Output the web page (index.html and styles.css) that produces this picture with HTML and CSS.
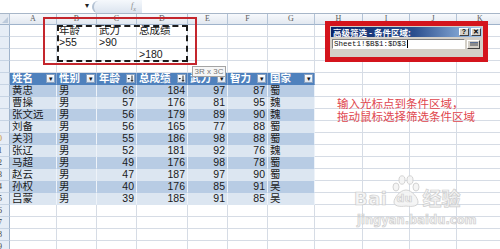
FILE: index.html
```html
<!DOCTYPE html>
<html lang="zh-CN">
<head>
<meta charset="utf-8">
<title>高级筛选</title>
<link rel="stylesheet" href="styles.css">
</head>
<body>
<div class="app">
  <div class="formula-bar">
    <div class="name-box"></div>
    <span class="name-arrow">▾</span>
    <div class="fx-zone"><span class="grip"></span><span class="fx">f<sub>x</sub></span></div>
    <div class="formula-input"></div>
  </div>

  <table class="grid">
    <colgroup>
      <col class="c-rh"><col class="c-a"><col class="c-b"><col class="c-c"><col class="c-d"><col class="c-e">
      <col class="c-f"><col class="c-g"><col class="c-h"><col class="c-i"><col class="c-j"><col class="c-k">
    </colgroup>
    <thead>
      <tr><th class="corner"><span class="corner-tri"></span></th><th>A</th><th>B</th><th>C</th><th>D</th><th>E</th><th>F</th><th>G</th><th>H</th><th>I</th><th>J</th><th>K</th></tr>
    </thead>
    <tbody>
      <tr><th class="rh"></th><td></td><td>年龄</td><td>武力</td><td>总成绩</td><td></td><td></td><td></td><td></td><td></td><td></td><td></td></tr>
      <tr><th class="rh"></th><td></td><td>&gt;55</td><td>&gt;90</td><td></td><td></td><td></td><td></td><td></td><td></td><td></td><td></td></tr>
      <tr><th class="rh"></th><td></td><td></td><td></td><td>&gt;180</td><td></td><td></td><td></td><td></td><td></td><td></td><td></td></tr>
      <tr><th class="rh"></th><td></td><td></td><td></td><td></td><td></td><td></td><td></td><td></td><td></td><td></td><td></td></tr>
      <tr class="t-head">
        <th class="rh"></th>
        <td class="t"><div class="hd"><span>姓名</span><i class="dd">▾</i></div></td>
        <td class="t"><div class="hd"><span>性别</span><i class="dd">▾</i></div></td>
        <td class="t"><div class="hd"><span>年龄</span><i class="dd sort"><svg viewBox="0 0 7 7" width="7" height="7"><path d="M0.5 3 L3 3 L1.75 4.6 Z" fill="#111"/><path d="M5 0.5 V6.2 M3.9 5 L5 6.4 L6.1 5" stroke="#111" stroke-width="0.9" fill="none"/></svg></i></div></td>
        <td class="t"><div class="hd"><span>总成绩</span><i class="dd sort"><svg viewBox="0 0 7 7" width="7" height="7"><path d="M0.5 3 L3 3 L1.75 4.6 Z" fill="#111"/><path d="M5 0.5 V6.2 M3.9 5 L5 6.4 L6.1 5" stroke="#111" stroke-width="0.9" fill="none"/></svg></i></div></td>
        <td class="t"><div class="hd"><span>武力</span><i class="dd">▾</i></div></td>
        <td class="t"><div class="hd"><span>智力</span><i class="dd">▾</i></div></td>
        <td class="t"><div class="hd"><span>国家</span><i class="dd">▾</i></div></td>
        <td></td><td></td><td></td><td></td>
      </tr>
      <tr class="band-d"><th class="rh"></th><td class="t">黄忠</td><td class="t">男</td><td class="t n">66</td><td class="t n">184</td><td class="t n">97</td><td class="t n">87</td><td class="t">蜀</td><td></td><td></td><td></td><td></td></tr>
      <tr class="band-l"><th class="rh"></th><td class="t">曹操</td><td class="t">男</td><td class="t n">57</td><td class="t n">176</td><td class="t n">81</td><td class="t n">95</td><td class="t">魏</td><td></td><td></td><td></td><td></td></tr>
      <tr class="band-d"><th class="rh"></th><td class="t">张文远</td><td class="t">男</td><td class="t n">56</td><td class="t n">179</td><td class="t n">89</td><td class="t n">90</td><td class="t">魏</td><td></td><td></td><td></td><td></td></tr>
      <tr class="band-l"><th class="rh"></th><td class="t">刘备</td><td class="t">男</td><td class="t n">56</td><td class="t n">165</td><td class="t n">77</td><td class="t n">88</td><td class="t">蜀</td><td></td><td></td><td></td><td></td></tr>
      <tr class="band-d"><th class="rh"><span class="rn active">0</span></th><td class="t">关羽</td><td class="t">男</td><td class="t n">55</td><td class="t n">186</td><td class="t n">98</td><td class="t n">88</td><td class="t">蜀</td><td></td><td></td><td></td><td></td></tr>
      <tr class="band-l"><th class="rh"><span class="rn">1</span></th><td class="t">张辽</td><td class="t">男</td><td class="t n">52</td><td class="t n">181</td><td class="t n">92</td><td class="t n">76</td><td class="t">魏</td><td></td><td></td><td></td><td></td></tr>
      <tr class="band-d"><th class="rh"><span class="rn">2</span></th><td class="t">马超</td><td class="t">男</td><td class="t n">49</td><td class="t n">176</td><td class="t n">98</td><td class="t n">78</td><td class="t">蜀</td><td></td><td></td><td></td><td></td></tr>
      <tr class="band-l"><th class="rh"><span class="rn">3</span></th><td class="t">赵云</td><td class="t">男</td><td class="t n">47</td><td class="t n">187</td><td class="t n">97</td><td class="t n">90</td><td class="t">蜀</td><td></td><td></td><td></td><td></td></tr>
      <tr class="band-d"><th class="rh"><span class="rn">4</span></th><td class="t">孙权</td><td class="t">男</td><td class="t n">40</td><td class="t n">176</td><td class="t n">85</td><td class="t n">91</td><td class="t">吴</td><td></td><td></td><td></td><td></td></tr>
      <tr class="band-l"><th class="rh"><span class="rn">5</span></th><td class="t">吕蒙</td><td class="t">男</td><td class="t n">39</td><td class="t n">185</td><td class="t n">91</td><td class="t n">85</td><td class="t">吴</td><td></td><td></td><td></td><td></td></tr>
      <tr><th class="rh"><span class="rn">6</span></th><td></td><td></td><td></td><td></td><td></td><td></td><td></td><td></td><td></td><td></td><td></td></tr>
      <tr><th class="rh"><span class="rn">7</span></th><td></td><td></td><td></td><td></td><td></td><td></td><td></td><td></td><td></td><td></td><td></td></tr>
      <tr><th class="rh"><span class="rn">8</span></th><td></td><td></td><td></td><td></td><td></td><td></td><td></td><td></td><td></td><td></td><td></td></tr>
      <tr><th class="rh"><span class="rn">9</span></th><td></td><td></td><td></td><td></td><td></td><td></td><td></td><td></td><td></td><td></td><td></td></tr>
    </tbody>
  </table>

  <!-- criteria range highlight and copy marquee -->
  <div class="red-frame"></div>
  <div class="marquee"></div>
  <div class="size-tip">3R x 3C</div>

  <!-- collapsed advanced-filter dialog -->
  <div class="dialog">
    <div class="dlg-title">
      <span>高级筛选 - 条件区域:</span>
      <span class="dlg-btns"><b class="dlg-btn">?</b><b class="dlg-btn">✕</b></span>
    </div>
    <div class="dlg-row">
      <div class="dlg-input">Sheet1!$B$1:$D$3<span class="caret"></span></div>
      <div class="dlg-pick"><span></span></div>
    </div>
  </div>

  <div class="note">输入光标点到条件区域，<br>拖动鼠标选择筛选条件区域</div>

  <div class="watermark">
    <div class="wm-top">
      <span class="wm-bai">Bai</span>
      <span class="wm-paw">
        <svg viewBox="0 0 30 34" width="30" height="34">
          <g fill="#f5f5f5" stroke="#cfcfcf" stroke-width="1">
            <ellipse cx="5" cy="13" rx="3" ry="4"/>
            <ellipse cx="11" cy="6" rx="3" ry="4.2"/>
            <ellipse cx="19" cy="6" rx="3" ry="4.2"/>
            <ellipse cx="25" cy="13" rx="3" ry="4"/>
            <path d="M15 16 C9 16 3 24 3 28 C3 32 8 33 15 32 C22 33 27 32 27 28 C27 24 21 16 15 16 Z"/>
          </g>
        </svg>
        <span class="wm-du">du</span>
      </span>
      <span class="wm-jy">经验</span>
    </div>
    <div class="wm-url">jingyan.baidu.com</div>
  </div>
</div>
</body>
</html>
```

FILE: styles.css
```css
* { box-sizing: border-box; }

html, body {
  margin: 0;
  padding: 0;
  background: #fff;
}

body {
  width: 500px;
  height: 249px;
  overflow: hidden;
  font-family: "Liberation Sans", "Noto Sans CJK SC", sans-serif;
}

.app {
  position: relative;
  width: 500px;
  height: 249px;
  overflow: hidden;
  background: #fff;
}

/* formula bar */
.formula-bar {
  display: flex;
  height: 14px;
  border-bottom: 1px solid #a7b6c8;
  background: #fff;
}
.name-box { width: 82px; }
.name-arrow {
  width: 10px;
  font-size: 8px;
  line-height: 11px;
  color: #222;
  text-align: center;
}
.fx-zone {
  width: 50px;
  display: flex;
  align-items: center;
  justify-content: space-between;
  padding-right: 6px;
  background: linear-gradient(#f5f8fc, #dbe4ef);
  border-radius: 7px 0 0 7px;
}
.grip {
  width: 7px;
  height: 12px;
  border-left: 2px solid #b4c2d3;
  border-radius: 7px 0 0 7px;
}
.fx {
  font: italic 8px "Liberation Serif", serif;
  color: #8a8a8a;
}
.fx sub { font-size: 6px; }
.formula-input { flex: 1; background: #fff; }

/* worksheet grid */
.grid {
  border-collapse: separate;
  border-spacing: 0;
  table-layout: fixed;
  width: 504px;
}
.c-rh { width: 10px; }
.c-a { width: 47px; }
.c-b, .c-c, .c-e, .c-f { width: 40px; }
.c-d { width: 51px; }
.c-g, .c-i, .c-j, .c-k { width: 47px; }
.c-h { width: 48px; }

.grid th,
.grid td {
  padding: 0 0 0 2px;
  height: 12px;
  overflow: hidden;
  white-space: nowrap;
  border-right: 1px solid #d6dce5;
  border-bottom: 1px solid #d6dce5;
  font-size: 10.5px;
  line-height: 11px;
  color: #1a1a1a;
  font-weight: normal;
  text-align: left;
}

.grid thead th {
  height: 11px;
  padding: 0;
  text-align: center;
  background: linear-gradient(#f7f9fc, #e2e8f0);
  border-right-color: #b3c3d6;
  border-bottom-color: #9fb3cb;
  font: 8px/10px "Liberation Serif", serif;
  color: #5a5a5a;
}
.grid thead th.corner { position: relative; background: #e3e9f1; }
.corner-tri {
  position: absolute;
  right: 1px;
  bottom: 1px;
  border-left: 6px solid transparent;
  border-bottom: 6px solid #bccadb;
}

.grid .rh {
  padding: 0;
  background: #e6edf6;
  border-right-color: #9fb3cb;
  border-bottom-color: #c7d4e4;
  font: 8px/11px "Liberation Serif", serif;
  color: #3c3c3c;
}
.rn { display: block; margin-left: -2px; }
.rn.active { color: #c98a1e; }

/* table region */
.t-head .t {
  background: #4f81bd;
  color: #fff;
  font-weight: bold;
  border-right-color: #89a8d0;
  border-bottom-color: #4f81bd;
  padding: 0 1px 0 2px;
}
.hd {
  display: flex;
  align-items: center;
  justify-content: space-between;
}
.dd {
  display: flex;
  align-items: center;
  justify-content: center;
  width: 9px;
  height: 9px;
  background: linear-gradient(#ffffff, #dde5ef);
  border: 1px solid #8ba2c0;
  color: #111;
  font-style: normal;
  font-weight: normal;
  font-size: 7px;
  line-height: 7px;
}
.band-d .t { background: #b8cce4; }
.band-l .t { background: #dce6f1; }
.band-d .t,
.band-l .t {
  border-right-color: #eef3f9;
  border-bottom-color: transparent;
}
.grid td.n { text-align: right; padding: 0 2px 0 0; }

/* overlays */
.red-frame {
  position: absolute;
  left: 43px;
  top: 17px;
  width: 154px;
  height: 48px;
  border: 2px solid #c4262d;
}
.marquee {
  position: absolute;
  left: 57px;
  top: 25px;
  width: 131px;
  height: 37px;
  border: 2px dashed #1c1c1c;
}
.size-tip {
  position: absolute;
  left: 192px;
  top: 66px;
  width: 34px;
  height: 11px;
  background: #f6f6f6;
  border: 1px solid #a4a4a4;
  font: 8px/9px "Liberation Sans", sans-serif;
  color: #777;
  text-align: center;
}

.dialog {
  position: absolute;
  left: 325px;
  top: 21px;
  width: 163px;
  height: 41px;
  border: 5px solid #d4141c;
  background: #d4d0c8;
  padding: 1px 1px 0;
  display: flex;
  flex-direction: column;
  gap: 2px;
}
.dlg-title {
  height: 10px;
  display: flex;
  align-items: center;
  justify-content: space-between;
  padding: 0 1px 0 2px;
  background: linear-gradient(90deg, #0a246a, #2c4f8e 55%, #a6caf0);
  color: #fff;
  font: bold 8.5px/10px "Noto Sans CJK SC", sans-serif;
}
.dlg-btns { display: flex; gap: 2px; }
.dlg-btn {
  width: 10px;
  height: 8px;
  background: #d4d0c8;
  border: 1px solid;
  border-color: #fff #404040 #404040 #fff;
  color: #000;
  font: bold 7px/6px "Liberation Sans", sans-serif;
  text-align: center;
}
.dlg-row {
  display: flex;
  align-items: center;
  gap: 2px;
  padding: 0 2px 0 1px;
}
.dlg-input {
  flex: 1;
  height: 10px;
  background: #fff;
  border: 1px solid;
  border-color: #808080 #fff #fff #808080;
  font: 7.5px/8px "Liberation Mono", monospace;
  color: #111;
  padding-left: 1px;
  display: flex;
  align-items: center;
}
.caret { width: 1px; height: 8px; background: #000; margin-left: 1px; }
.dlg-pick {
  width: 13px;
  height: 9px;
  background: #d4d0c8;
  border: 1px solid;
  border-color: #fff #404040 #404040 #fff;
  display: flex;
  align-items: center;
  justify-content: center;
}
.dlg-pick span {
  width: 8px;
  height: 4px;
  background: #8c8c8c;
  border-top: 1px solid #5a6f94;
}

.note {
  position: absolute;
  left: 337px;
  top: 97px;
  color: #e0454d;
  font: 11.5px/13px "Noto Sans CJK SC", sans-serif;
}

.watermark {
  position: absolute;
  left: 354px;
  top: 172px;
  width: 120px;
  color: #f4f4f4;
  -webkit-text-stroke: 0.7px #c9c9c9;
  opacity: 0.9;
}
.wm-top {
  display: flex;
  align-items: flex-end;
  height: 36px;
}
.wm-bai {
  font: bold 18px/18px "DejaVu Sans", sans-serif;
  letter-spacing: 0.5px;
}
.wm-paw {
  position: relative;
  width: 30px;
  height: 34px;
  margin-left: 3px;
}
.wm-paw svg { display: block; }
.wm-du {
  position: absolute;
  left: 6px;
  bottom: 4px;
  font: bold 11px/11px "DejaVu Sans", sans-serif;
}
.wm-jy {
  margin-left: 2px;
  font: bold 19px/20px "Noto Sans CJK SC", sans-serif;
}
.wm-url {
  margin-top: 6px;
  padding-left: 3px;
  font: bold 11.5px/12px "DejaVu Sans", sans-serif;
}
```
